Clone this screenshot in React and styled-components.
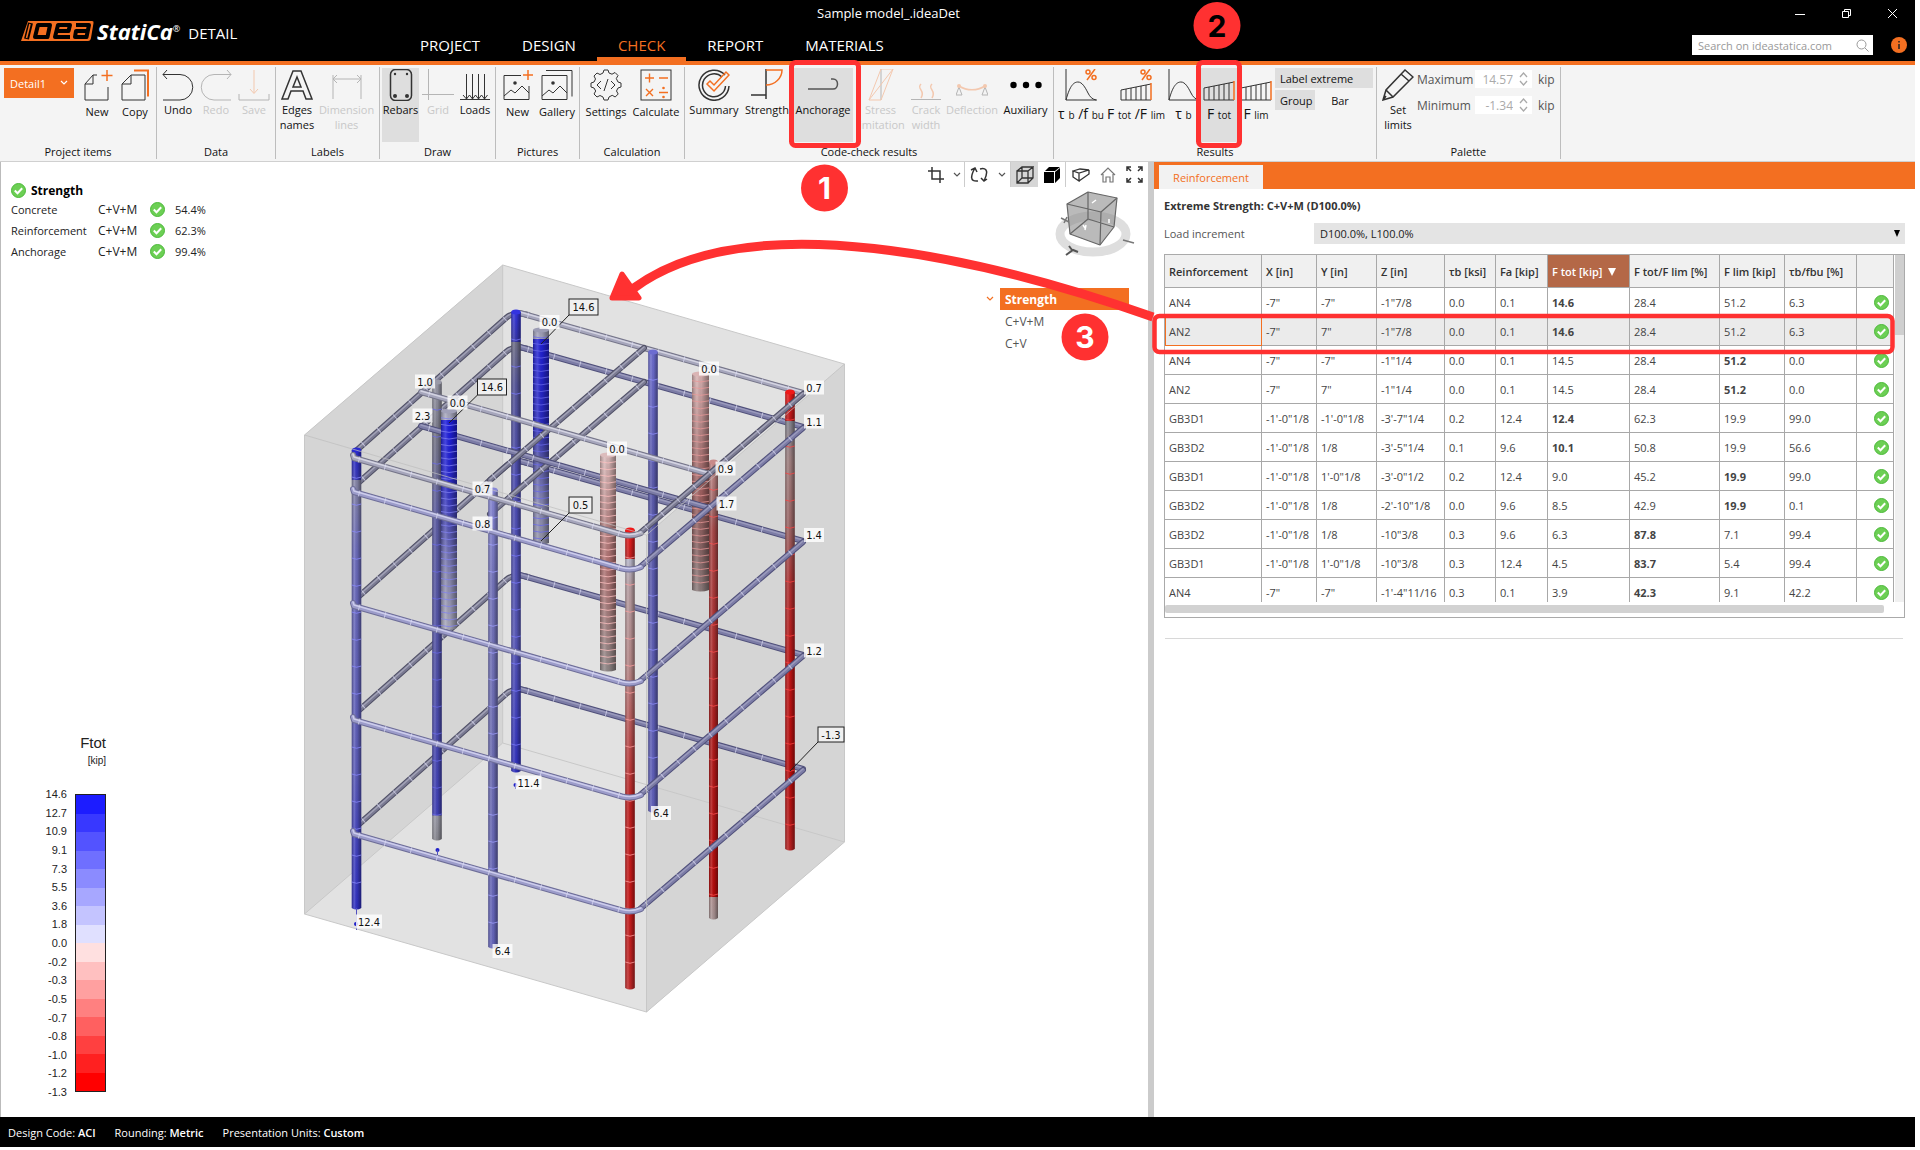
import React from "react";
import styled, { createGlobalStyle, css } from "styled-components";

const ORANGE = "#f36f21";
const RED = "#ff3131";

const Global = createGlobalStyle`
  *, *::before, *::after { box-sizing: border-box; }
  body { margin: 0; background: #fff; }
  body, button, input, select, table {
    font-family: "Open Sans", "Noto Sans", sans-serif;
    font-size: 11px;
    line-height: 15px;
    color: #222;
  }
  button { border: 0; background: none; padding: 0; margin: 0; }
`;

const Page = styled.div`
  position: relative;
  display: flex;
  flex-direction: column;
  min-height: 100vh;
  padding: 0 5px 3px 0;
  overflow: hidden;
`;

/* ---------- header ---------- */
const Header = styled.header`
  display: flex;
  height: 65px;
  background: #000;
  border-bottom: 4px solid ${ORANGE};
  color: #fff;
`;
const Brand = styled.div`
  display: flex;
  align-items: center;
  flex: 0 0 399px;
  padding: 0 0 0 20px;
`;
const BrandName = styled.span`
  margin-left: 3px;
  font: italic 700 22px/24px "Open Sans", sans-serif;
`;
const Registered = styled.sup`
  font: 400 9px/9px "Open Sans", sans-serif;
`;
const Product = styled.span`
  margin: 4px 0 0 8px;
  font-size: 15px;
  line-height: 20px;
`;
const HeaderCenter = styled.div`
  flex: 1;
  display: flex;
  flex-direction: column;
  justify-content: space-between;
`;
const DocTitle = styled.div`
  padding-top: 4px;
  text-align: center;
  font-size: 13px;
  line-height: 18px;
`;
const Tabs = styled.nav`
  display: flex;
`;
const Tab = styled.button`
  height: 30px;
  padding: 1px 21px 0;
  font-size: 15px;
  line-height: 20px;
  color: ${(p) => (p.$active ? ORANGE : "#fff")};
  border-bottom: 4px solid ${(p) => (p.$active ? ORANGE : "transparent")};
`;
const HeaderRight = styled.div`
  flex: 0 0 537px;
  display: flex;
  flex-direction: column;
  align-items: flex-end;
  gap: 8px;
`;
const WindowButtons = styled.div`
  display: flex;
  height: 27px;
`;
const WindowButton = styled.button`
  width: 46px;
  display: grid;
  place-items: center;
`;
const SearchRow = styled.div`
  display: flex;
  align-items: center;
  gap: 18px;
  padding-right: 8px;
`;
const SearchBox = styled.label`
  display: flex;
  align-items: center;
  width: 181px;
  height: 20px;
  padding: 0 4px 0 6px;
  background: #fff;
`;
const SearchInput = styled.input`
  flex: 1;
  min-width: 0;
  border: 0;
  padding: 0;
  font-size: 11px;
  background: none;
  &::placeholder { color: #999; opacity: 1; }
`;

/* ---------- ribbon ---------- */
const Ribbon = styled.div`
  display: flex;
  height: 97px;
  padding-top: 2px;
  background: #f4f4f4;
  border-bottom: 1px solid #d0d0d0;
`;
const Group = styled.section`
  display: flex;
  flex-direction: column;
  justify-content: space-between;
  height: 92px;
  padding: 1px 2px 0;
  border-right: 1px solid #bdbdbd;
`;
const GroupItems = styled.div`
  display: flex;
`;
const GroupLabel = styled.div`
  text-align: center;
  font-size: 11px;
  color: #111;
`;
const Tool = styled.button`
  display: flex;
  flex-direction: column;
  align-items: center;
  gap: ${(p) => (p.$low ? 3 : 1)}px;
  width: ${(p) => p.$w}px;
  height: 74px;
  padding-top: 1px;
  color: #111;
  white-space: nowrap;
  background: ${(p) => (p.$active ? "#dedede" : "none")};
  & > svg { flex: none; opacity: ${(p) => (p.disabled ? 0.32 : 1)}; }
  & > span { color: ${(p) => (p.disabled ? "#c8c8c8" : "#111")}; }
`;
const Formula = styled.span`
  font-size: 14px;
  line-height: 20px;
`;
const Small = styled.small`
  font-size: 10px;
`;
const ProjectSelect = styled.select`
  appearance: none;
  width: 70px;
  height: 30px;
  padding: 0 6px;
  border: 0;
  border-radius: 0;
  color: #fff;
  background: ${ORANGE};
`;
const SelectWrap = styled.div`
  position: relative;
  margin: 0 4px 0 2px;
  & > svg { position: absolute; right: 6px; top: 12px; pointer-events: none; }
`;
const ToggleGrid = styled.div`
  display: grid;
  grid-template-columns: 40px 40px;
  grid-auto-rows: 20px;
  gap: 2px 5px;
  align-content: start;
  width: 99px;
`;
const Toggle = styled.button`
  padding: 0 5px;
  white-space: nowrap;
  color: #111;
  background: ${(p) => (p.$active ? "#dedede" : "none")};
  ${(p) => p.$wide && css`grid-column: 1 / -1; width: 98px; text-align: left;`}
`;
const Limits = styled.div`
  display: grid;
  grid-template-columns: 58px 57px auto;
  grid-auto-rows: 18px;
  gap: 8px 0;
  align-content: start;
  align-items: center;
  padding: 2px 3px 0 0;
  color: #555;
  font-size: 12px;
`;
const Spin = styled.div`
  display: flex;
  align-items: center;
  height: 18px;
  padding-right: 4px;
  background: #fff;
`;
const SpinInput = styled.input`
  width: 40px;
  border: 0;
  padding: 0 2px 0 0;
  text-align: right;
  font-size: 12px;
  color: #aaa;
  background: none;
  margin-right: 4px;
`;
const Unit = styled.span`
  padding-left: 6px;
`;

/* ---------- workspace ---------- */
const Workspace = styled.main`
  flex: 1;
  display: flex;
`;
const View = styled.section`
  position: relative;
  flex: 1;
  min-width: 0;
  border-left: 1px solid #bbb;
`;
const Canvas = styled.svg`
  position: absolute;
  left: -1px;
  top: 0;
  pointer-events: none;
`;
const ViewTop = styled.div`
  position: relative;
  display: flex;
  justify-content: space-between;
  align-items: flex-start;
`;
const Summary = styled.table`
  margin: 20px 0 0 10px;
  border-collapse: collapse;
  color: #222;
  td, th { padding: 0; height: 21px; text-align: left; }
  th { height: 17px; }
  td svg, th svg { display: block; }
`;
const SummaryTitle = styled.div`
  display: flex;
  align-items: center;
  gap: 5px;
  font-size: 12px;
  font-weight: 700;
  color: #000;
`;
const SummaryCell = styled.td`
  width: ${(p) => p.$w}px;
  font-size: ${(p) => (p.$large ? 12 : 11)}px;
`;
const ViewTools = styled.div`
  display: flex;
  align-items: center;
  height: 25px;
`;
const ViewTool = styled.button`
  width: ${(p) => p.$w || 27}px;
  height: 25px;
  display: grid;
  place-items: center;
  background: ${(p) => (p.$active ? "#d6d6d6" : "none")};
  border-right: ${(p) => (p.$sep ? "1px solid #ccc" : "0")};
`;
const Tree = styled.ul`
  position: relative;
  display: flex;
  flex-direction: column;
  align-items: flex-end;
  margin: 26px 19px 0 0;
  padding: 0;
  list-style: none;
`;
const TreeItem = styled.li`
  display: flex;
  align-items: center;
  gap: 6px;
`;
const TreeButton = styled.button`
  width: 129px;
  height: 22px;
  padding-left: 5px;
  text-align: left;
  font-size: 12px;
  font-weight: ${(p) => (p.$active ? 700 : 400)};
  color: ${(p) => (p.$active ? "#fff" : "#555")};
  background: ${(p) => (p.$active ? ORANGE : "none")};
`;
const Legend = styled.figure`
  position: absolute;
  left: 33px;
  bottom: 17px;
  width: 72px;
  margin: 0;
  text-align: right;
  font-family: "Liberation Sans", Arial, sans-serif;
  color: #222;
`;
const LegendTitle = styled.div`
  font-size: 15px;
  line-height: 20px;
`;
const LegendUnit = styled.div`
  font-size: 10px;
  line-height: 16px;
  margin-bottom: 17px;
`;
const LegendBody = styled.div`
  display: flex;
  justify-content: flex-end;
  align-items: center;
  gap: 8px;
`;
const LegendLabels = styled.div`
  display: flex;
  flex-direction: column;
  justify-content: space-between;
  height: 314px;
  line-height: 16px;
`;
const LegendBar = styled.div`
  display: flex;
  flex-direction: column;
  width: 31px;
  height: 298px;
  border: 1px solid #222;
`;
const Swatch = styled.div`
  flex: 1;
  background: ${(p) => p.$c};
`;

const Panel = styled.aside`
  flex: 0 0 767px;
  border-left: 6px solid #cbcbcb;
`;
const PanelTabs = styled.div`
  display: flex;
  height: 27px;
  padding: 3px 0 0 5px;
  background: ${ORANGE};
`;
const PanelTab = styled.button`
  width: 104px;
  background: #f2f2f2;
  color: ${ORANGE};
`;
const PanelBody = styled.div`
  padding: 9px 10px 0 10px;
`;
const PanelTitle = styled.h2`
  margin: 0 0 10px;
  font-size: 11px;
  line-height: 15px;
  font-weight: 700;
  color: #333;
`;
const Field = styled.div`
  display: grid;
  grid-template-columns: 150px 1fr;
  align-items: center;
  margin-bottom: 10px;
  color: #555;
`;
const FieldSelectWrap = styled.div`
  position: relative;
  & > svg { position: absolute; right: 4px; top: 7px; pointer-events: none; }
`;
const FieldSelect = styled.select`
  appearance: none;
  width: 100%;
  height: 21px;
  padding: 0 6px;
  border: 0;
  border-radius: 0;
  background: #e4e4e4;
`;
const Grid = styled.div`
  border: 1px solid #aaa;
`;
const GridMain = styled.div`
  display: flex;
  height: 347px;
`;
const GridScroll = styled.div`
  flex: 1;
  overflow: hidden;
`;
const VBar = styled.div`
  flex: 0 0 9px;
  background: #f0f0f0;
  &::before { content: ""; display: block; height: 80px; background: #cfcfcf; }
`;
const HBar = styled.div`
  height: 15px;
  padding: 3px 20px 3px 0;
  &::before { content: ""; display: block; height: 8px; border-radius: 2px; background: #d2d2d2; }
`;
const Data = styled.table`
  width: 100%;
  table-layout: fixed;
  border-collapse: collapse;
  margin: -1px 0 0 -1px;
`;
const HeadCell = styled.th`
  height: 33px;
  padding: 0 4px;
  text-align: left;
  white-space: nowrap;
  font-weight: 600;
  color: ${(p) => (p.$sorted ? "#fff" : "#333")};
  background: ${(p) => (p.$sorted ? "#b46847" : "#f0f0f0")};
  border: 1px solid #a8a8a8;
`;
const Row = styled.tr`
  background: ${(p) => (p.$selected ? "#ebebeb" : "#fff")};
`;
const Cell = styled.td`
  height: 29px;
  padding: 0 4px;
  white-space: nowrap;
  color: #444;
  border: 1px solid #a8a8a8;
  font-weight: ${(p) => (p.$bold ? 700 : 400)};
  ${(p) => p.$focus && css`outline: 1px solid ${ORANGE}; outline-offset: -1px;`}
  & > svg { display: block; margin-left: 13px; }
`;
const Rule = styled.hr`
  margin: 20px 2px 0 1px;
  border: 0;
  border-top: 1px solid #d8d8d8;
`;

const Footer = styled.footer`
  display: flex;
  align-items: center;
  gap: 19px;
  height: 30px;
  padding: 0 8px;
  background: #000;
  color: #fff;
  b { font-weight: 600; }
`;
const Marks = styled.svg`
  position: absolute;
  left: 0;
  top: 0;
  pointer-events: none;
`;

/* ---------- icons ---------- */
const K = "#333";
const glyphs = {
  newDoc: (<><path d="M16 6H12L4 15v16h23V18M4 15h8V6" stroke={K} /><path d="M26 1v11M20.500 6.500h11" stroke={ORANGE} strokeWidth="1.500" /></>),
  copyDoc: (<><path d="M12 6h14v25H3V15zM3 15h9V6" stroke={K} /><path d="M15 1.500h14v26" stroke={ORANGE} strokeWidth="2" /></>),
  undo: <path d="M5 1L1 5.500L5 10M1 5.500h17a12.500 12.500 0 0 1 0 25.500H1" stroke={K} />,
  redo: <path d="M27 1L31 5.500L27 10M31 5.500H14a12.500 12.500 0 0 0 0 25.500H31" stroke={K} />,
  save: (<><path d="M1 25v6h30v-6" stroke={K} /><path d="M16 1v23M12 20l4 4.500l4-4.500" stroke={ORANGE} /></>),
  letterA: <path d="M12 2h8l11 28h-6l-3-8H10l-3 8H1zM16 8l-4 10h8z" stroke={K} strokeWidth="1.500" />,
  dims: <path d="M2 6v24M30 6v24M2 10h28M6 6l-4 4l4 4M26 6l4 4l-4 4" stroke={K} />,
  rebars: (<><rect x="5.500" y=".5" width="21" height="31" rx="5" stroke={K} strokeWidth="1.500" /><g fill={K}><circle cx="10" cy="5" r="1.200" /><circle cx="22" cy="5" r="1.200" /><circle cx="10" cy="27" r="2" /><circle cx="22" cy="27" r="2" /></g></>),
  grid: <path d="M6.500 0v31M0 25.500h32" stroke={K} />,
  loads: <path d="M1 30.500h30M7.500 5v25M13.500 5v25M19.500 5v25M25.500 5v25M4 26l3.500 4l3-4l3 4l3-4l3 4l3-4l3 4l3-4" stroke={K} />,
  picNew: (<><path d="M19 6.500H2v24h25V17" stroke={K} /><path d="M2 27l7-6l4 3l7-7l7 7" stroke={K} /><circle cx="13" cy="14" r="1.800" fill={K} /><path d="M26 1v10M21 6h10" stroke={ORANGE} strokeWidth="1.500" /></>),
  gallery: (<><path d="M1 6.500h25v24H1zM1 27l7-6l4 3l7-7l7 7M5 1.500h26v26" stroke={K} /><circle cx="12" cy="14" r="1.800" fill={K} /></>),
  gear: (<><path d="M13 4l1-3h4l1 3l3 1.200l3-1.700l3 3l-1.700 3L28 13l3 1v4l-3 1l-1.500 3l1.700 3l-3 3l-3-1.700L19 28l-1 3h-4l-1-3l-3-1.500L7 28l-3-3l1.700-3L4 19l-3-1v-4l3-1l1.500-3L4 7l3-3l3 1.500z" stroke={K} /><path d="M11 12l-4 4l4 4M21 12l4 4l-4 4M18 10l-4 12" stroke={K} /></>),
  calc: (<><rect x="1" y="1" width="30" height="30" stroke={K} /><path d="M5 9h9M9.500 4.500v9M19 9h9M6 20l7 7M13 20l-7 7M19 23.500h9" stroke={ORANGE} strokeWidth="1.400" /><g fill={ORANGE}><circle cx="23.500" cy="19" r="1.300" /><circle cx="23.500" cy="28" r="1.300" /></g></>),
  summary: (<><path d="M27 6A15 15 0 1 0 31 17M24 8A11.500 11.500 0 1 0 27.500 17" stroke={K} strokeWidth="1.500" /><path d="M9 15l3-3l4 4L28 3l3 3L16 22z" stroke={ORANGE} strokeWidth="1.500" /></>),
  strength: (<><path d="M15 0v30M0 26h15" stroke={K} strokeWidth="1.500" /><path d="M15 1h16c0 8-7 15-16 15" stroke={ORANGE} strokeWidth="1.500" /></>),
  anchor: <path d="M1 20h25c6 0 6-10 0-10h-2" stroke="#555" strokeWidth="1.500" />,
  stress: (<><path d="M16 0v31" stroke={K} /><path d="M4 31h12L28 0H16zM28 0L4 31" stroke={ORANGE} /></>),
  crack: (<><path d="M1 30.500h30" stroke={K} /><path d="M11 15c-5 5 5 6 0 14M22 15c-5 5 5 6 0 14" stroke={ORANGE} strokeWidth="1.500" /></>),
  deflect: (<><path d="M3 17c8 5 18 5 26 0" stroke={ORANGE} strokeWidth="1.500" /><path d="M0 26l3-8l3 8zM26 26l3-8l3 8z" stroke={K} /><circle cx="3" cy="17" r="2" fill={ORANGE} /><circle cx="29" cy="17" r="2" fill={ORANGE} /></>),
  dots: <g fill="#000"><circle cx="3.500" cy="16" r="3.200" /><circle cx="16" cy="16" r="3.200" /><circle cx="28.500" cy="16" r="3.200" /></g>,
  curve: <path d="M1 0v31h31M1 31C5 16 9 13 13 13s7 5 10 11c2 4 4 6 8 7" stroke={K} />,
  curvePct: (<><path d="M1 0v31h31M1 31C5 16 9 13 13 13s7 5 10 11c2 4 4 6 8 7" stroke={K} /><Percent /></>),
  trap: (<><path d="M1 31V19L31 13M1 31h30M6 31V18M11 31V17M16 31V16M21 31V15M26 31V14" stroke={K} /><path d="M31 12v19" stroke={ORANGE} strokeWidth="1.500" /></>),
  trapPct: (<><path d="M1 31V21L31 15M1 31h30M6 31V20M11 31V19M16 31V18M21 31V17M26 31V16" stroke={K} /><path d="M31 14v17" stroke={ORANGE} strokeWidth="1.500" /><Percent /></>),
  pencil: <path d="M1 31l3-10L23 1l8 7L11 28zM4 21l7 7M19 5l8 7M1 31l3-4" stroke={K} strokeWidth="1.500" />,
};
function Percent() {
  return (<g stroke={ORANGE} strokeWidth="1.500"><path d="M30 0L22 11" /><circle cx="23" cy="3" r="2" /><circle cx="29" cy="8.500" r="2" /></g>);
}
const Glyph = ({ name }) => (
  <svg width="32" height="32" viewBox="0 0 32 32" fill="none" aria-hidden="true">{glyphs[name]}</svg>
);
const Check = () => (
  <svg width="15" height="15" viewBox="0 0 15 15" aria-hidden="true">
    <circle cx="7.500" cy="7.500" r="7" fill="#6ccf54" stroke="#4cb93a" />
    <path d="M3.800 7.500l2.700 2.800l4.700-5" fill="none" stroke="#fff" strokeWidth="2" />
  </svg>
);
const Chevron = ({ color = "#555" }) => (
  <svg width="8" height="6" viewBox="0 0 8 6" fill="none" aria-hidden="true">
    <path d="M1 1l3 3l3-3" stroke={color} strokeWidth="1.200" />
  </svg>
);

/* ---------- 3D model ---------- */
const bars = {
  A: { x: 356.5, y1: 450, y2: 908, w: 9.5, step: 27, tick: "#8a8aff", stops: [[0, "#2a2ad0"], [6.5, "#3a3ab8"], [6.6, "#8888a8"], [22, "#6c6cbc"], [70, "#5c5cba"], [85, "#4444be"], [100, "#2f2fc4"]] },
  B: { x: 437, y1: 382, y2: 839, w: 9.5, step: 27, tick: "#6a6ae8", stops: [[0, "#9a9aa8"], [12, "#777788"], [30, "#5c5ca4"], [60, "#5252a8"], [94.5, "#4040b8"], [94.6, "#9a9aa8"], [100, "#888890"]] },
  C: { x: 516, y1: 312, y2: 771, w: 9.5, step: 27, tick: "#7a7aff", stops: [[0, "#3434e0"], [6.5, "#3535a8"], [6.6, "#707088"], [16, "#55559a"], [40, "#4c4cb4"], [70, "#5858b8"], [100, "#3030c0"]] },
  D: { x: 541, y1: 330, y2: 543, w: 16, step: 6.7, tick: "#6868e8", stops: [[0, "#9c9cb4"], [4, "#a8a8c0"], [4.1, "#2020d8"], [45, "#2a2ac0"], [60, "#5555a8"], [80, "#8585b4"], [100, "#9898aa"]] },
  E: { x: 449, y1: 411, y2: 628, w: 16, step: 6.7, tick: "#8080f0", stops: [[0, "#a0a0b8"], [4, "#b0b0c4"], [4.1, "#1c1ce0"], [30, "#2828d0"], [50, "#4a4ab4"], [75, "#8888b0"], [100, "#aaaabc"]] },
  F: { x: 493, y1: 490, y2: 947, w: 9.5, step: 27, tick: "#a0a0ff", stops: [[0, "#8888d8"], [20, "#7474bc"], [60, "#6c6cb4"], [100, "#6464bc"]] },
  G: { x: 653, y1: 352, y2: 811, w: 9.5, step: 27, tick: "#9090ff", stops: [[0, "#6c6cd0"], [30, "#5a5aac"], [100, "#6060bc"]] },
  H: { x: 630, y1: 530, y2: 988, w: 9.5, step: 27, tick: "#ffa0a0", stops: [[0, "#f01818"], [6.3, "#c42020"], [6.4, "#b8b8cc"], [12, "#b8a0a4"], [30, "#b88888"], [45, "#bc5050"], [60, "#c02020"], [80, "#c81616"], [100, "#c02828"]] },
  I: { x: 790, y1: 392, y2: 849, w: 9.5, step: 27, tick: "#ff4040", stops: [[0, "#f01818"], [6.3, "#b81818"], [6.4, "#858590"], [15, "#a08080"], [30, "#9c6464"], [42, "#b03030"], [60, "#c01414"], [85, "#b80c0c"], [100, "#b82020"]] },
  J: { x: 713.5, y1: 462, y2: 918, w: 9, step: 27, tick: "#ff5050", stops: [[0, "#c88a8a"], [10, "#a06868"], [15, "#a84848"], [40, "#b03030"], [60, "#b01c1c"], [95, "#b80a0a"], [95.1, "#b09090"], [100, "#a89494"]] },
  K: { x: 700.5, y1: 374, y2: 590, w: 17, step: 6.7, tick: "#e89898", stops: [[0, "#dab4b4"], [30, "#b08080"], [55, "#a06060"], [80, "#886464"], [100, "#8c7c7c"]] },
  L: { x: 608, y1: 455, y2: 670, w: 16, step: 6.7, tick: "#ffc0c0", stops: [[0, "#dcbcbc"], [25, "#bc9090"], [50, "#b07070"], [80, "#a08080"], [100, "#908888"]] },
};
const RINGS = [0, 34, 148, 262, 376];

function Bar({ id }) {
  const b = bars[id];
  const ticks = [];
  for (let y = b.y1 + b.step; y < b.y2 - 2; y += b.step) ticks.push(y);
  const l = b.x - b.w / 2;
  const r = b.x + b.w / 2;
  const body = `M${l} ${b.y1}V${b.y2}Q${b.x} ${b.y2 + 3} ${r} ${b.y2}V${b.y1}Z`;
  return (
    <g>
      <linearGradient id={`bar${id}`} x1="0" y1="0" x2="0" y2="1">
        {b.stops.map(([o, c]) => <stop key={o} offset={`${o}%`} stopColor={c} />)}
      </linearGradient>
      <path d={body} fill={`url(#bar${id})`} />
      <path d={body} fill="url(#round)" />
      {ticks.map((y) => <path key={y} d={`M${l} ${y}Q${b.x} ${y + 2.5} ${r} ${y}`} stroke={b.tick} strokeOpacity=".75" strokeWidth="1" fill="none" />)}
      <ellipse cx={b.x} cy={b.y1} rx={b.w / 2} ry="2.500" fill={b.stops[0][1]} />
    </g>
  );
}
function Rod({ d, tone = "light", step = 26 }) {
  const t = {
    light: ["#6e6e98", "#9c9cca", "#cdcdec"],
    grey: ["#76768a", "#a6a6bc", "#d4d4e2"],
    mid: ["#50507a", "#7c7ca6", "#9a9abc"],
    dark: ["#505066", "#7a7a92", "#a2a2b6"],
  }[tone];
  return (
    <g fill="none" strokeLinejoin="round" strokeLinecap="round">
      <path d={d} stroke={t[0]} strokeWidth="6" />
      <path d={d} stroke={t[1]} strokeWidth="4" />
      <path d={d} stroke={t[2]} strokeWidth="1.500" transform="translate(0 -1)" />
      <path d={d} stroke="#dcdcf4" strokeOpacity=".7" strokeWidth="6" strokeLinecap="butt" strokeDasharray={`1 ${step}`} strokeDashoffset="-8" />
    </g>
  );
}
const tags = [
  [549.5, 322, "0.0"], [425, 381.5, "1.0"], [457.5, 402.5, "0.0"], [422.5, 415.5, "2.3"], [709, 368.5, "0.0"],
  [814, 387.5, "0.7"], [814, 421.5, "1.1"], [617, 448.5, "0.0"], [725.5, 468.5, "0.9"], [726.5, 503.5, "1.7"],
  [482.5, 488.5, "0.7"], [482.5, 523.5, "0.8"], [814, 535, "1.4"], [814, 650.5, "1.2"], [528.5, 782.5, "11.4"],
  [661, 813, "6.4"], [369, 921.5, "12.4"], [502.5, 951, "6.4"],
];
const callouts = [
  [569, 299, 29, 16, "14.6", 541, 344], [477.5, 379, 29, 16, "14.6", 449, 423],
  [569, 497, 23, 16, "0.5", 541, 541], [818, 727, 26, 15, "-1.3", 790, 771],
];

function Model() {
  return (
    <Canvas width="1150" height="955" viewBox="0 162 1150 955" role="img" aria-label="Reinforcement model">
      <defs>
        <linearGradient id="round">
          <stop offset="0" stopColor="#000" stopOpacity=".3" />
          <stop offset=".3" stopColor="#fff" stopOpacity=".16" />
          <stop offset=".55" stopColor="#000" stopOpacity=".05" />
          <stop offset="1" stopColor="#000" stopOpacity=".42" />
        </linearGradient>
      </defs>
      <path d="M304.500 435L502.700 265L844.500 364V842L646.500 1012L304.500 914Z" fill="#e2e2e2" />
      <path d="M304.500 435L502.700 265V743L304.500 914Z" fill="#d5d5d5" />
      <path d="M646.500 535L844.500 364V842L646.500 1012Z" fill="#d5d5d5" />
      <path d="M304.500 435L502.700 265L844.500 364V842L646.500 1012L304.500 914ZM502.700 265V743L304.500 914M502.700 743L844.500 842" fill="none" stroke="#c8c8c8" />

      {RINGS.map((o) => (
        <g key={o} transform={`translate(0 ${o})`}>
          <Rod d="M357 450L506 318Q514 311 528 315" tone="dark" step={20} />
          <Rod d="M520 313L803 393" tone={o ? "mid" : "grey"} />
        </g>
      ))}
      <Bar id="C" /><Bar id="B" /><Bar id="G" /><Bar id="I" /><Bar id="D" /><Bar id="K" />
      {[34, 0].map((o) => (
        <g key={o} transform={`translate(0 ${o})`}>
          <Rod d="M644 348L490 480" tone="dark" step={20} />
          <Rod d="M421 392L713 475" tone={o ? "mid" : "grey"} />
        </g>
      ))}
      <Bar id="E" /><Bar id="J" /><Bar id="L" /><Bar id="F" /><Bar id="A" /><Bar id="H" />
      {[...RINGS].reverse().map((o) => (
        <g key={o} transform={`translate(0 ${o})`}>
          <Rod d="M640 533L803 394" tone={o ? "mid" : "dark"} step={20} />
          <Rod d="M353 455L354 458L622 534.500Q632 537 641 533" tone={o ? "light" : "grey"} />
        </g>
      ))}
      <path d="M304.500 435L646.500 535V1012M646.500 535L844.500 364" fill="none" stroke="#bdbdbd" strokeOpacity=".7" />
      <g fill="#2020c8"><circle cx="356" cy="924" r="2" /><circle cx="437.500" cy="850" r="2" /><circle cx="515.500" cy="785" r="2" /></g>
      <path d="M356.500 908v22M437.500 850v5M515.500 785v4" stroke="#5050c0" />

      <g fontFamily="'DejaVu Sans Condensed', 'DejaVu Sans', sans-serif" fontSize="11" textAnchor="middle" fill="#111">
        {callouts.map(([x, y, w, h, t, tx, ty]) => (
          <g key={`${x}-${y}`}>
            <path d={`M${x} ${y + h}L${tx} ${ty}`} stroke="#222" />
            <rect x={x} y={y} width={w} height={h} fill="#f0f0f0" stroke="#222" />
            <text x={x + w / 2} y={y + h / 2 + 4}>{t}</text>
          </g>
        ))}
        {tags.map(([x, y, t]) => (
          <g key={`${x}-${y}`}>
            <rect x={x - t.length * 3 - 1} y={y - 7} width={t.length * 6 + 2} height="14" fill="#fff" fillOpacity=".8" />
            <text x={x} y={y + 4}>{t}</text>
          </g>
        ))}
      </g>

      <ellipse cx="1093" cy="234" rx="33" ry="18" fill="none" stroke="#dedede" strokeWidth="9" />
      <g fill="#8c8c8c" fillOpacity=".6" stroke="#666" strokeWidth="1.200" strokeLinejoin="round">
        <path d="M1067 204L1088 192L1117 198L1114 227L1100 245L1070 234Z" />
        <path d="M1067 204L1101 212L1117 198M1101 212L1100 245M1088 192V219L1070 234M1088 219L1114 227" fill="none" />
      </g>
      <path d="M1061 218l8 4M1064 223l3-6M1123 240l11 3" stroke="#777" strokeWidth="1.500" />
      <path d="M1066 255l7-5l5 2M1072 250l-3-4" stroke="#555" strokeWidth="2" fill="none" />
      <g stroke="#fff" strokeWidth="1.500"><path d="M1092 203l4-3M1083 225l2 3M1086 225l-1 5M1109 219v4" /></g>
    </Canvas>
  );
}

function Annotations() {
  return (
    <Marks width="1920" height="420" viewBox="0 0 1920 420" aria-hidden="true">
      <g fill="none" stroke={RED} strokeWidth="5">
        <rect x="791.500" y="62.500" width="67" height="83" rx="4" />
        <rect x="1198.500" y="62.500" width="41" height="83" rx="4" />
        <rect x="1154.500" y="316" width="738" height="36" rx="5" strokeWidth="4.500" />
        <path d="M1153 317C985 258 750 203 634 288" strokeWidth="9" />
      </g>
      <path d="M612 298L622 274L639 298Z" fill={RED} stroke={RED} strokeWidth="5" strokeLinejoin="round" />
      <g fontFamily="Inter, 'Open Sans', sans-serif" fontSize="30" fontWeight="700" textAnchor="middle">
        <circle cx="824.500" cy="188" r="23.500" fill={RED} /><text x="824.500" y="199" fill="#fff">1</text>
        <circle cx="1217" cy="25.500" r="23.500" fill={RED} /><text x="1217" y="37" fill="#000">2</text>
        <circle cx="1085" cy="337" r="23.500" fill={RED} /><text x="1085" y="348" fill="#fff">3</text>
      </g>
    </Marks>
  );
}

/* ---------- content ---------- */
const toolGroups = [
  { label: "Data", tools: [["undo", "Undo", 38], ["redo", "Redo", 38, "off"], ["save", "Save", 38, "off"]] },
  { label: "Labels", tools: [["letterA", "Edges\nnames", 38], ["dims", "Dimension\nlines", 61, "off"]] },
  { label: "Draw", tools: [["rebars", "Rebars", 37, "on"], ["grid", "Grid", 38, "off"], ["loads", "Loads", 36]] },
  { label: "Pictures", low: true, tools: [["picNew", "New", 39], ["gallery", "Gallery", 40]] },
  { label: "Calculation", low: true, tools: [["gear", "Settings", 48], ["calc", "Calculate", 52]] },
  { label: "Code-check results", tools: [["summary", "Summary", 54], ["strength", "Strength", 52], ["anchor", "Anchorage", 60, "on"], ["stress", "Stress\nlimitation", 55, "off"], ["crack", "Crack\nwidth", 36, "off"], ["deflect", "Deflection", 56, "off"], ["dots", "Auxiliary", 51]] },
];
const formulas = [
  ["curvePct", <>τ <Small>b</Small> /f <Small>bu</Small></>, 50],
  ["trapPct", <>F <Small>tot</Small> /F <Small>lim</Small></>, 60],
  ["curve", <>τ <Small>b</Small></>, 35],
  ["trap", <>F <Small>tot</Small></>, 36, true],
  ["trap", <>F <Small>lim</Small></>, 38],
];
const columns = [["Reinforcement", 97], ["X [in]", 55], ["Y [in]", 60], ["Z [in]", 68], ["τb [ksi]", 51], ["Fa [kip]", 52], ["F tot [kip]", 82], ["F tot/F lim [%]", 90], ["F lim [kip]", 65], ["τb/fbu [%]", 72], ["", null]];
const rows = [
  ["AN4", "-7\"", "-7\"", "-1\"7/8", "0.0", "0.1", "14.6", "28.4", "51.2", "6.3", 6],
  ["AN2", "-7\"", "7\"", "-1\"7/8", "0.0", "0.1", "14.6", "28.4", "51.2", "6.3", 6],
  ["AN4", "-7\"", "-7\"", "-1\"1/4", "0.0", "0.1", "14.5", "28.4", "51.2", "0.0", 8],
  ["AN2", "-7\"", "7\"", "-1\"1/4", "0.0", "0.1", "14.5", "28.4", "51.2", "0.0", 8],
  ["GB3D1", "-1'-0\"1/8", "-1'-0\"1/8", "-3'-7\"1/4", "0.2", "12.4", "12.4", "62.3", "19.9", "99.0", 6],
  ["GB3D2", "-1'-0\"1/8", "1/8", "-3'-5\"1/4", "0.1", "9.6", "10.1", "50.8", "19.9", "56.6", 6],
  ["GB3D1", "-1'-0\"1/8", "1'-0\"1/8", "-3'-0\"1/2", "0.2", "12.4", "9.0", "45.2", "19.9", "99.0", 8],
  ["GB3D2", "-1'-0\"1/8", "1/8", "-2'-10\"1/8", "0.0", "9.6", "8.5", "42.9", "19.9", "0.1", 8],
  ["GB3D2", "-1'-0\"1/8", "1/8", "-10\"3/8", "0.3", "9.6", "6.3", "87.8", "7.1", "99.4", 7],
  ["GB3D1", "-1'-0\"1/8", "1'-0\"1/8", "-10\"3/8", "0.3", "12.4", "4.5", "83.7", "5.4", "99.4", 7],
  ["AN4", "-7\"", "-7\"", "-1'-4\"11/16", "0.3", "0.1", "3.9", "42.3", "9.1", "42.2", 7],
];
const legendValues = ["14.6", "12.7", "10.9", "9.1", "7.3", "5.5", "3.6", "1.8", "0.0", "-0.2", "-0.3", "-0.5", "-0.7", "-0.8", "-1.0", "-1.2", "-1.3"];
const legendColors = ["#1c1cff", "#3838ff", "#5353ff", "#6f6fff", "#8b8bff", "#a7a7ff", "#c4c4ff", "#e0e0ff", "#ffe0e0", "#ffc0c0", "#ffa0a0", "#ff8080", "#ff6060", "#ff4040", "#ff2020", "#ff0000"];

const lines = (text) => text.split("\n").map((t, i) => <React.Fragment key={t}>{i > 0 && <br />}{t}</React.Fragment>);

export default function App() {
  return (
    <Page>
      <Global />
      <Header>
        <Brand>
          <svg width="74" height="22" viewBox="0 0 74 22" fill="none" role="img" aria-label="IDEA">
            <path d="M8 1H72Q74 1 73.500 3L71 18Q70.500 21 68 21H1Z" fill={ORANGE} />
            <path d="M10.500 3L6.500 19" stroke="#000" strokeWidth="5" />
            <path d="M10 4L6.500 18" stroke={ORANGE} strokeWidth="1.500" />
            <g stroke="#000" strokeWidth="4" strokeLinejoin="round">
              <path d="M18 5H30L27.500 17H15Z" />
              <path d="M50 17H35L38 5H50L48.500 11H38" />
              <path d="M56 5H69L66.500 17H55L56 11H66" />
            </g>
          </svg>
          <BrandName>StatiCa<Registered>®</Registered></BrandName>
          <Product>DETAIL</Product>
        </Brand>
        <HeaderCenter>
          <DocTitle>Sample model_.ideaDet</DocTitle>
          <Tabs>
            {["PROJECT", "DESIGN", "CHECK", "REPORT", "MATERIALS"].map((t) => <Tab key={t} $active={t === "CHECK"}>{t}</Tab>)}
          </Tabs>
        </HeaderCenter>
        <HeaderRight>
          <WindowButtons>
            <WindowButton aria-label="Minimize"><svg width="11" height="11"><path d="M0 6.500h10" stroke="#fff" /></svg></WindowButton>
            <WindowButton aria-label="Restore"><svg width="11" height="11" fill="none" stroke="#fff"><path d="M1.500 3.500h6v6h-6zM3.500 3V1.500h6v6H8" /></svg></WindowButton>
            <WindowButton aria-label="Close"><svg width="11" height="11"><path d="M1 1l9 9M10 1l-9 9" stroke="#fff" /></svg></WindowButton>
          </WindowButtons>
          <SearchRow>
            <SearchBox>
              <SearchInput aria-label="Search" placeholder="Search on ideastatica.com" />
              <svg width="13" height="13" fill="none" stroke="#999"><circle cx="5.500" cy="5.500" r="4.500" /><path d="M9 9l3.500 3.500" /></svg>
            </SearchBox>
            <button aria-label="Information">
              <svg width="16" height="16" display="block"><circle cx="8" cy="8" r="8" fill={ORANGE} /><path d="M8 7v5M8 4v1.500" stroke="#222" strokeWidth="1.500" /></svg>
            </button>
          </SearchRow>
        </HeaderRight>
      </Header>

      <Ribbon>
        <Group>
          <GroupItems>
            <SelectWrap>
              <ProjectSelect aria-label="Project item" defaultValue="Detail1"><option>Detail1</option></ProjectSelect>
              <Chevron color="#fff" />
            </SelectWrap>
            <Tool $w={38} $low><Glyph name="newDoc" /><span>New</span></Tool>
            <Tool $w={38} $low><Glyph name="copyDoc" /><span>Copy</span></Tool>
          </GroupItems>
          <GroupLabel>Project items</GroupLabel>
        </Group>
        {toolGroups.map((g) => (
          <Group key={g.label}>
            <GroupItems>
              {g.tools.map(([icon, text, w, state]) => (
                <Tool key={icon} $w={w} $low={g.low} $active={state === "on"} disabled={state === "off"}>
                  <Glyph name={icon} /><span>{lines(text)}</span>
                </Tool>
              ))}
            </GroupItems>
            <GroupLabel>{g.label}</GroupLabel>
          </Group>
        ))}
        <Group>
          <GroupItems>
            {formulas.map(([icon, text, w, on], i) => (
              <Tool key={i} $w={w} $active={on} $low><Glyph name={icon} /><Formula>{text}</Formula></Tool>
            ))}
            <ToggleGrid>
              <Toggle $active $wide>Label extreme</Toggle>
              <Toggle $active>Group</Toggle>
              <Toggle>Bar</Toggle>
            </ToggleGrid>
          </GroupItems>
          <GroupLabel>Results</GroupLabel>
        </Group>
        <Group>
          <GroupItems>
            <Tool $w={38}><Glyph name="pencil" /><span>{lines("Set\nlimits")}</span></Tool>
            <Limits>
              {[["Maximum", "14.57"], ["Minimum", "-1.34"]].map(([name, v]) => (
                <React.Fragment key={name}>
                  <label htmlFor={name}>{name}</label>
                  <Spin>
                    <SpinInput id={name} defaultValue={v} disabled />
                    <svg width="9" height="14" fill="none" stroke="#aaa" strokeWidth="1.300"><path d="M1 5l3.500-4L8 5M1 9l3.500 4L8 9" /></svg>
                  </Spin>
                  <Unit>kip</Unit>
                </React.Fragment>
              ))}
            </Limits>
          </GroupItems>
          <GroupLabel>Palette</GroupLabel>
        </Group>
      </Ribbon>

      <Workspace>
        <View>
          <Model />
          <ViewTop>
            <Summary>
              <tbody>
                <tr><th colSpan={4}><SummaryTitle><Check />Strength</SummaryTitle></th></tr>
                {[["Concrete", "54.4%"], ["Reinforcement", "62.3%"], ["Anchorage", "99.4%"]].map(([n, v]) => (
                  <tr key={n}>
                    <SummaryCell $w={87}>{n}</SummaryCell>
                    <SummaryCell $w={52} $large>C+V+M</SummaryCell>
                    <SummaryCell $w={25}><Check /></SummaryCell>
                    <SummaryCell $w={40}>{v}</SummaryCell>
                  </tr>
                ))}
              </tbody>
            </Summary>
            <ViewTools>
              <ViewTool aria-label="Crop"><svg width="16" height="16" fill="none" stroke={K} strokeWidth="1.500"><path d="M4 0v12h12M0 4h12v12" /></svg></ViewTool>
              <ViewTool $w={16} $sep aria-label="Crop options"><Chevron /></ViewTool>
              <ViewTool $w={28} aria-label="Rotate"><svg width="18" height="16" fill="none" stroke={K} strokeWidth="1.500"><path d="M8 14C-1 15 1 8 5 1M1 3l4-2l2 4M10 2c8-2 8 4 4 12M11 11l3 3l3-2" /></svg></ViewTool>
              <ViewTool $w={18} $sep aria-label="Rotate options"><Chevron /></ViewTool>
              <ViewTool $active aria-label="Wireframe"><svg width="18" height="18" fill="none" stroke={K} strokeWidth="1.300"><path d="M1 5h11v12H1zM1 5l5-4h11L12 5M17 1v11l-5 5M6 1v11L1 17M6 12h11" /></svg></ViewTool>
              <ViewTool $w={28} $sep aria-label="Solid"><svg width="18" height="18"><path d="M1 6h10v11H1zM2 5l4-4h11l-5 4zM12 6l5-4v10l-5 5z" fill="#000" /></svg></ViewTool>
              <ViewTool $w={30} aria-label="Perspective"><svg width="18" height="14" fill="none" stroke={K} strokeWidth="1.300"><path d="M1 3l7-2l9 1l-10 3zM1 3v6l6 4V5M7 13l10-7V2" /></svg></ViewTool>
              <ViewTool $w={24} aria-label="Home"><svg width="16" height="16" fill="none" stroke="#777" strokeWidth="1.200"><path d="M1 8l7-7l7 7M3 7v8h3v-5h4v5h3V7" /></svg></ViewTool>
              <ViewTool $w={28} aria-label="Fit view"><svg width="17" height="17" fill="none" stroke={K} strokeWidth="1.500"><path d="M1 5V1h4M12 1h4v4M16 12v4h-4M5 16H1v-4M1 1l4 4M16 1l-4 4M16 16l-4-4M1 16l4-4" /></svg></ViewTool>
            </ViewTools>
          </ViewTop>
          <Tree>
            <TreeItem><Chevron color={ORANGE} /><TreeButton $active>Strength</TreeButton></TreeItem>
            <TreeItem><TreeButton>C+V+M</TreeButton></TreeItem>
            <TreeItem><TreeButton>C+V</TreeButton></TreeItem>
          </Tree>
          <Legend>
            <LegendTitle>Ftot</LegendTitle>
            <LegendUnit>[kip]</LegendUnit>
            <LegendBody>
              <LegendLabels>{legendValues.map((v) => <span key={v}>{v}</span>)}</LegendLabels>
              <LegendBar>{legendColors.map((c) => <Swatch key={c} $c={c} />)}</LegendBar>
            </LegendBody>
          </Legend>
        </View>

        <Panel>
          <PanelTabs><PanelTab>Reinforcement</PanelTab></PanelTabs>
          <PanelBody>
            <PanelTitle>Extreme Strength: C+V+M (D100.0%)</PanelTitle>
            <Field>
              <label htmlFor="increment">Load increment</label>
              <FieldSelectWrap>
                <FieldSelect id="increment" defaultValue="a"><option value="a">D100.0%, L100.0%</option></FieldSelect>
                <svg width="8" height="7"><path d="M1 0h6L4 7z" fill="#000" /></svg>
              </FieldSelectWrap>
            </Field>
            <Grid>
              <GridMain>
                <GridScroll>
                  <Data>
                    <colgroup>{columns.map(([n, w]) => <col key={n} width={w || undefined} />)}</colgroup>
                    <thead>
                      <tr>{columns.map(([n]) => <HeadCell key={n} $sorted={n === "F tot [kip]"}>{n}{n === "F tot [kip]" && <>&nbsp;&nbsp;<svg width="8" height="8"><path d="M0 0h8L4 8z" fill="#fff" /></svg></>}</HeadCell>)}</tr>
                    </thead>
                    <tbody>
                      {rows.map((r, i) => (
                        <Row key={i} $selected={i === 1}>
                          {r.slice(0, 10).map((v, c) => <Cell key={c} $bold={r[10] === c} $focus={i === 1 && c === 0}>{v}</Cell>)}
                          <Cell><Check /></Cell>
                        </Row>
                      ))}
                    </tbody>
                  </Data>
                </GridScroll>
                <VBar />
              </GridMain>
              <HBar />
            </Grid>
            <Rule />
          </PanelBody>
        </Panel>
      </Workspace>

      <Footer>
        <span>Design Code: <b>ACI</b></span>
        <span>Rounding: <b>Metric</b></span>
        <span>Presentation Units: <b>Custom</b></span>
      </Footer>
      <Annotations />
    </Page>
  );
}
